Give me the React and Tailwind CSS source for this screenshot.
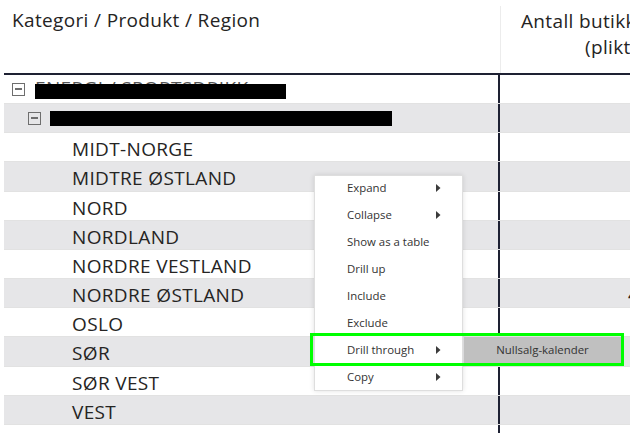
import React from "react";

const regions = [
  "MIDT-NORGE",
  "MIDTRE ØSTLAND",
  "NORD",
  "NORDLAND",
  "NORDRE VESTLAND",
  "NORDRE ØSTLAND",
  "OSLO",
  "SØR",
  "SØR VEST",
  "VEST",
];

function Minus() {
  return (
    <span className="flex h-[13px] w-[13px] shrink-0 items-center justify-center border-[1.5px] border-[#6e6e6e]">
      <span className="block h-[1.5px] w-[7px] bg-[#6e6e6e]" />
    </span>
  );
}

function Row({ gray, children, right }) {
  return (
    <div
      className={
        "flex h-[29.17px] border-b border-[#e2e2e2] " +
        (gray ? "bg-[#e6e6e8]" : "bg-white")
      }
    >
      <div className="relative w-[494px] shrink-0">{children}</div>
      <div className="flex-1 border-l-2 border-[#1e2133] pt-[3px] pl-[128px] text-[19px] leading-[24px] text-[#252423] whitespace-nowrap">
        {right}
      </div>
    </div>
  );
}

function Arrow() {
  return (
    <svg width="5" height="8" viewBox="0 0 5 8" className="shrink-0">
      <path d="M0 0 L4.5 4 L0 8 Z" fill="#3b3b3b" />
    </svg>
  );
}

const menu = [
  ["Expand", true],
  ["Collapse", true],
  ["Show as a table", false],
  ["Drill up", false],
  ["Include", false],
  ["Exclude", false],
  ["Drill through", true],
  ["Copy", true],
];

export default function App() {
  return (
    <div className="relative h-[433px] w-[630px] overflow-hidden bg-white font-['Open_Sans',sans-serif] text-[#252423]">
      <div className="ml-[4px]">
        {/* header */}
        <div className="flex h-[75px] border-b-2 border-[#1e2133]">
          <div className="w-[496px] shrink-0 pl-[8px] pt-[8px] text-[19px] leading-[24px] tracking-[0.35px]">
            Kategori / Produkt / Region
          </div>
          <div className="mt-[6px] flex-1 border-l border-[#ececec] pl-[20px] pt-[2px] text-[19px] leading-[26px] tracking-[0.35px] whitespace-nowrap">
            <div>Antall butikker med</div>
            <div className="pl-[64px]">(pliktige)</div>
          </div>
        </div>

        {/* rows */}
        <Row gray={false}>
          <div className="flex h-full items-center gap-[10px] pl-[8px]">
            <Minus />
            <span className="relative -mt-[3px] text-[19px] leading-[24px] tracking-[0.35px] whitespace-nowrap text-[#555]">
              ENERGI / SPORTSDRIKK
              <span className="absolute left-0 top-[8px] h-[15px] w-[251px] bg-black" />
            </span>
          </div>
        </Row>
        <Row gray={true}>
          <div className="flex h-full items-center gap-[9px] pl-[24px]">
            <Minus />
            <span className="block h-[15px] w-[342px] bg-black" />
          </div>
        </Row>
        {regions.map((r, i) => (
          <Row
            key={r}
            gray={i % 2 === 1}
            right={r === "NORDRE ØSTLAND" ? "4" : null}
          >
            <div className="pl-[68px] pt-[4px] text-[19px] leading-[24px] tracking-[0.35px] whitespace-nowrap">
              {r}
            </div>
          </Row>
        ))}
        <div className="flex h-[10px]">
          <div className="w-[494px] shrink-0" />
          <div className="flex-1 border-l-2 border-[#1e2133]" />
        </div>
      </div>

      {/* context menu */}
      <div className="absolute left-[314px] top-[175px] h-[216px] w-[149px] border border-[#dedede] bg-white shadow-[0_0_5px_rgba(0,0,0,0.12)]">
        {menu.map(([label, sub]) => (
          <div
            key={label}
            className="flex h-[27px] items-center pb-[3px] pl-[32px] pr-[21px] text-[11.4px] text-[#333]"
          >
            <span className="flex-1">{label}</span>
            {sub && <Arrow />}
          </div>
        ))}
      </div>

      {/* submenu */}
      <div className="absolute left-[464px] top-[337px] flex h-[26px] w-[157px] items-center justify-center bg-[#c0c0c0] text-[11.4px] text-[#333]">
        Nullsalg-kalender
      </div>

      {/* highlight */}
      <div className="absolute left-[310px] top-[333px] h-[33px] w-[314px] border-[3px] border-[#00ff00]" />
    </div>
  );
}
